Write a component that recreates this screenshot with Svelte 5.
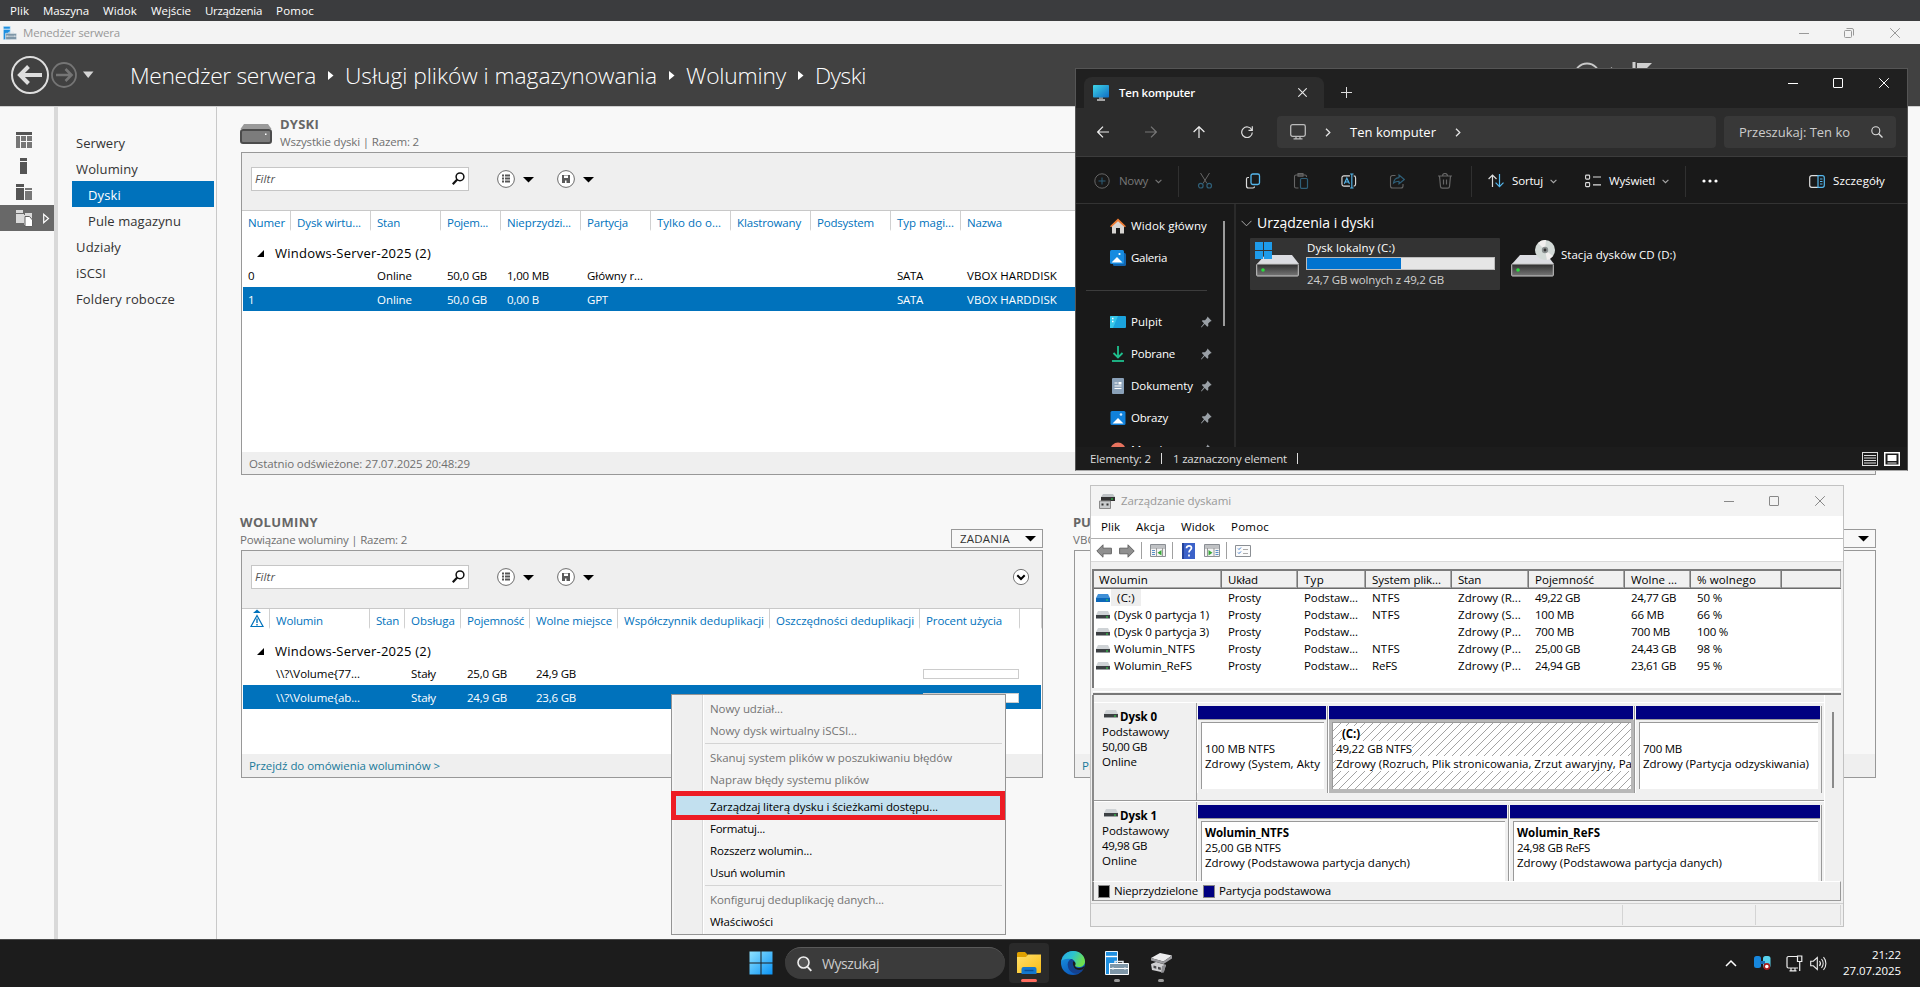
<script>
  // Sets a label to a known advance width by spreading the difference over its letters.
  function fit(node, w) {
    if (!w) return;
    const natural = node.getBoundingClientRect().width;
    const n = Math.max(1, node.textContent.length);
    node.style.letterSpacing = (w - natural) / n + 'px';
    node.style.width = w + 'px';
  }

  const vmMenu = [['Plik', 19], ['Maszyna', 46], ['Widok', 34], ['Wejście', 40], ['Urządzenia', 57], ['Pomoc', 38]];
  const crumbs = [['Menedżer serwera', 186], ['Usługi plików i magazynowania', 312], ['Woluminy', 100], ['Dyski', 51]];
  const nav = [
    { t: 'Serwery', w: 49 }, { t: 'Woluminy', w: 62 }, { t: 'Dyski', w: 33, sub: true, on: true },
    { t: 'Pule magazynu', w: 93, sub: true }, { t: 'Udziały', w: 45 }, { t: 'iSCSI', w: 30 }, { t: 'Foldery robocze', w: 99 }
  ];
  const diskHead = [['Numer', 37], ['Dysk wirtu...', 64], ['Stan', 23], ['Pojem...', 41], ['Nieprzydzi...', 64], ['Partycja', 41], ['Tylko do o...', 64], ['Klastrowany', 64], ['Podsystem', 57], ['Typ magi...', 57], ['Nazwa', 35]];
  const diskRows = [
    [['0', 7], null, ['Online', 35], ['50,0 GB', 40], ['1,00 MB', 42], ['Główny r...', 56], null, null, null, ['SATA', 26], ['VBOX HARDDISK', 90]],
    [['1', 6], null, ['Online', 35], ['50,0 GB', 40], ['0,00 B', 32], ['GPT', 21], null, null, null, ['SATA', 26], ['VBOX HARDDISK', 90]]
  ];
  const volHead = [['Wolumin', 47], ['Stan', 23], ['Obsługa', 44], ['Pojemność', 57], ['Wolne miejsce', 76], ['Współczynnik deduplikacji', 140], ['Oszczędności deduplikacji', 138], ['Procent użycia', 76], null, null];
  const volRows = [
    { cells: [['\\\\?\\Volume{77...', 84], null, ['Stały', 25], ['25,0 GB', 40], ['24,9 GB', 40]], used: 0 },
    { cells: [['\\\\?\\Volume{ab...', 84], null, ['Stały', 25], ['24,9 GB', 40], ['23,6 GB', 40]], used: 5 }
  ];
  const menu = [
    { t: 'Nowy udział...', w: 73, off: true }, { t: 'Nowy dysk wirtualny iSCSI...', w: 147, off: true }, null,
    { t: 'Skanuj system plików w poszukiwaniu błędów', w: 242, off: true }, { t: 'Napraw błędy systemu plików', w: 159, off: true }, null,
    { t: 'Zarządzaj literą dysku i ścieżkami dostępu...', w: 228, hot: true }, { t: 'Formatuj...', w: 55 }, { t: 'Rozszerz wolumin...', w: 102 }, { t: 'Usuń wolumin', w: 75 }, null,
    { t: 'Konfiguruj deduplikację danych...', w: 174, off: true }, { t: 'Właściwości', w: 63 }
  ];
  const places = [['desktop', 'Pulpit', 31], ['down', 'Pobrane', 44], ['doc', 'Dokumenty', 62], ['pic', 'Obrazy', 37], ['music', 'Muzyka', 41]];
  const mmcMenu = [['Plik', 19], ['Akcja', 29], ['Widok', 34], ['Pomoc', 38]];
  const mmcHead = [['Wolumin', 49], ['Układ', 30], ['Typ', 20], ['System plik...', 69], ['Stan', 23], ['Pojemność', 59], ['Wolne ...', 46], ['% wolnego', 59], null];
  const mmcRows = [
    [['(C:)', 18], ['NTFS', 28], ['Zdrowy (R...', 63], ['49,22 GB', 45], ['24,77 GB', 45], ['50 %', 25]],
    [['(Dysk 0 partycja 1)', 95], ['NTFS', 28], ['Zdrowy (S...', 63], ['100 MB', 39], ['66 MB', 33], ['66 %', 25]],
    [['(Dysk 0 partycja 3)', 95], null, ['Zdrowy (P...', 63], ['700 MB', 39], ['700 MB', 39], ['100 %', 31]],
    [['Wolumin_NTFS', 81], ['NTFS', 28], ['Zdrowy (P...', 63], ['25,00 GB', 45], ['24,43 GB', 45], ['98 %', 25]],
    [['Wolumin_ReFS', 78], ['ReFS', 25], ['Zdrowy (P...', 63], ['24,94 GB', 45], ['23,61 GB', 45], ['95 %', 25]]
  ];
  const disks = [
    { name: 'Dysk 0', size: '50,00 GB', cols: '131px 307px 187px', parts: [
      { b: null, s: ['100 MB NTFS', 70], d: ['Zdrowy (System, Akty', 115] },
      { b: ['(C:)', 18], s: ['49,22 GB NTFS', 76], d: ['Zdrowy (Rozruch, Plik stronicowania, Zrzut awaryjny, Pa', 296], sel: true },
      { b: null, s: ['700 MB', 39], d: ['Zdrowy (Partycja odzyskiwania)', 166] }
    ] },
    { name: 'Dysk 1', size: '49,98 GB', cols: '312px 313px', parts: [
      { b: ['Wolumin_NTFS', 84], s: ['25,00 GB NTFS', 76], d: ['Zdrowy (Podstawowa partycja danych)', 205] },
      { b: ['Wolumin_ReFS', 83], s: ['24,98 GB ReFS', 73], d: ['Zdrowy (Podstawowa partycja danych)', 205] }
    ] }
  ];
</script>

{#snippet T(c, cls)}{#if c}<span class="t {cls ?? ''}" use:fit={c[1]}>{c[0]}</span>{/if}{/snippet}

{#snippet chev(cls)}<svg class={cls} width="7" height="5" viewBox="0 0 7 5"><path d="M.6.8 3.5 3.7 6.4.8" fill="none" stroke="currentColor" stroke-width="1.1" /></svg>{/snippet}
{#snippet right()}<svg width="6" height="9" viewBox="0 0 6 9"><path d="M1 .8 4.8 4.5 1 8.2" fill="none" stroke="#e4e4e4" stroke-width="1.3" /></svg>{/snippet}
{#snippet caret()}<svg class="caret" width="11" height="6" viewBox="0 0 11 6"><path d="M0 0h11L5.500 5.600z" fill="#000" /></svg>{/snippet}
{#snippet winctl()}
  <svg width="10" height="10" viewBox="0 0 10 10"><path d="M0 5.500h10" stroke="currentColor" /></svg>
  <svg width="10" height="10" viewBox="0 0 10 10"><rect x=".5" y=".5" width="9" height="9" rx=".5" fill="none" stroke="currentColor" /></svg>
  <svg width="10" height="10" viewBox="0 0 10 10"><path d="M.2.2l9.600 9.600M9.800.2.2 9.800" stroke="currentColor" /></svg>
{/snippet}
{#snippet serverIcon(s)}
  <svg width={s} height={s} viewBox="0 0 24 24">
    <path d="M.5.5h12v23H.5z" fill="#1e8fe0" stroke="#e9f4fb" /><path d="M.5 5.500h12" stroke="#fff" stroke-width="1.400" />
    <path d="M4.500 12.500h19v11h-19z" fill="#7f97a8" stroke="#fff" /><path d="M4.500 17.500h19" stroke="#fff" /><path d="M10 12v-1.500h8V12" fill="none" stroke="#dfe8ee" stroke-width="1.500" /><path d="M8 16v3M20 16v3" stroke="#dfe8ee" />
  </svg>
{/snippet}
{#snippet miniDrive(sel)}
  <svg class="mini" width="14" height="8" viewBox="0 0 14 8">
    <path d="M2 0h10l2 4H0z" fill={sel ? '#3f8fd6' : '#cfd3d6'} /><path d="M0 4h14v4H0z" fill={sel ? '#0d67b8' : '#3c4043'} /><path d="M10 5.500h2v1h-2z" fill="#2fe04a" />
    {#if !sel}<path d="M0 7.500h14" stroke="#9a9ea1" />{/if}
  </svg>
{/snippet}
{#snippet tools()}
  <div class="tools">
    <div class="filter">{@render T(['Filtr', 20], 'it')}
      <svg width="13" height="13" viewBox="0 0 13 13"><circle cx="8" cy="4.800" r="3.900" fill="none" stroke="#111" stroke-width="1.500" /><path d="M5.200 7.600.8 12.200" stroke="#111" stroke-width="2.200" /></svg>
    </div>
    <svg class="c1" width="18" height="18" viewBox="0 0 18 18"><circle cx="9" cy="9" r="8.400" fill="#fff" stroke="#6b6b6b" /><path d="M5 5.500h2M5 8.500h2M5 11.500h2M8 5.500h5M8 8.500h5M8 11.500h5" stroke="#555" stroke-width="1.800" /></svg>
    {@render caret()}
    <svg class="c2" width="18" height="18" viewBox="0 0 18 18"><circle cx="9" cy="9" r="8.400" fill="#fff" stroke="#6b6b6b" /><path d="M5 5h8v8H5z" fill="#5a5a5a" /><path d="M7 5.500h4V8H7zM8 10.500h1.500V13H8z" fill="#fff" /></svg>
    {@render caret()}
  </div>
{/snippet}
{#snippet group()}
  <div class="group"><svg width="7" height="7" viewBox="0 0 7 7"><path d="M7 0v7H0z" fill="#000" /></svg>{@render T(['Windows-Server-2025 (2)', 156], 'md')}</div>
{/snippet}
{#snippet bigDrive(kind)}
  <svg class="drive" width="46" height="38" viewBox="0 0 46 38">
    <defs><linearGradient id="dg{kind}" x2="0" y2="1"><stop stop-color="#2e2e2e" /><stop offset="1" stop-color="#777" /></linearGradient></defs>
    <path d="M10 16h27l7 9H2z" fill="#dcdde2" /><rect x="1.700" y="25" width="41.600" height="12" rx=".8" fill="url(#dg{kind})" stroke="#c9c9c9" /><circle cx="8" cy="31" r="1.800" fill="#2bdc3e" />
    {#if kind === 'c'}
      <path d="M0 3h8v8H0zM9 3h8v8H9zM0 12h8v8H0zM9 12h8v8H9z" fill="#1e9bea" />
    {:else}
      <circle cx="35" cy="11" r="10" fill="#d3dad7" /><path d="M35 11 28 4a10 10 0 0 1 8-3zM35 11l8 6a10 10 0 0 1-6 4z" fill="#f1efee" /><circle cx="35" cy="11" r="3.200" fill="#8a9090" /><circle cx="35" cy="11" r="1.400" fill="#333" />
    {/if}
  </svg>
{/snippet}

<div class="screen">
  <div class="vm">{#each vmMenu as m}{@render T(m)}{/each}</div>
  <div class="smtitle">{@render serverIcon(14)}{@render T(['Menedżer serwera', 97])}
    <div class="ctl">
      <svg width="10" height="10" viewBox="0 0 10 10"><path d="M0 5.500h10" stroke="currentColor" /></svg>
      <svg width="10" height="10" viewBox="0 0 10 10"><rect x=".5" y="2.500" width="7" height="7" rx="1" fill="none" stroke="currentColor" /><path d="M2.500.5H8a1.500 1.500 0 0 1 1.500 1.500v5.500" fill="none" stroke="currentColor" /></svg>
      <svg width="10" height="10" viewBox="0 0 10 10"><path d="M.2.2l9.600 9.600M9.800.2.2 9.800" stroke="currentColor" /></svg>
    </div>
  </div>
  <header>
    <svg width="84" height="40" viewBox="0 0 84 40">
      <circle cx="20" cy="20" r="18" fill="none" stroke="#dedede" stroke-width="2" /><path d="M32 20H11M18.500 11.500 10 20l8.500 8.500" fill="none" stroke="#dedede" stroke-width="4" />
      <circle cx="54" cy="20" r="12" fill="none" stroke="#757575" stroke-width="1.800" /><path d="M46 20h15M55.500 14l6 6-6 6" fill="none" stroke="#757575" stroke-width="2.600" />
      <path d="M73 16.500h10.500L78.200 23z" fill="#d5d5d5" />
    </svg>
    <div class="crumbs">
      {#each crumbs as c, i}
        {#if i}<svg width="6" height="9" viewBox="0 0 6 9"><path d="M0 0l5.500 4.500L0 9z" fill="#fff" /></svg>{/if}
        {@render T(c)}
      {/each}
    </div>
    <svg class="flag" width="80" height="40" viewBox="0 0 80 40"><circle cx="14" cy="14" r="12.500" fill="none" stroke="#c9c9c9" stroke-width="1.800" /><path d="M38.500 5v22" stroke="#999" stroke-width="1.200" /><path d="M61 0v26" stroke="#cfcfcf" stroke-width="3" /><path d="M64 1h15l-7 7 7 7H64z" fill="#cfcfcf" /></svg>
  </header>

  <div class="body">
    <div class="strip">
      <svg width="16" height="16" viewBox="0 0 16 16" shape-rendering="crispEdges"><path d="M0 0h16v3H0z" fill="#555" /><path d="M0 4h4v12H0zM5 4h5v5H5zM11 4h5v5h-5zM5 10h5v6H5zM11 10h5v6h-5z" fill="#777" /></svg>
      <svg width="16" height="16" viewBox="0 0 16 16" shape-rendering="crispEdges"><path d="M4 0h7v3H4zM4 4h7v12H4z" fill="#555" /></svg>
      <svg width="16" height="16" viewBox="0 0 16 16" shape-rendering="crispEdges"><path d="M0 0h8v3H0zM0 4h8v12H0z" fill="#555" /><path d="M9 4h7v2H9zM9 7h7v9H9z" fill="#777" /></svg>
      <div class="sel">
        <svg width="34" height="17" viewBox="0 0 34 17"><path d="M0 0h7v3H0zM0 4h8v9H0zM9 3h7v3H9zM8 5h8v10H8z" fill="#d9d9d9" /><path d="M9 6.500h4.500L16.500 10v6.500H9z" fill="#fff" stroke="#5f5f5f" /><path d="M27.700 4.300v8.400l4.800-4.200z" fill="none" stroke="#fff" stroke-width="1.200" /></svg>
      </div>
    </div>
    <nav>{#each nav as n}<div class:sub={n.sub} class:on={n.on}>{@render T([n.t, n.w], 'md')}</div>{/each}</nav>
    <main>
      <div class="head one">
        <svg width="32" height="20" viewBox="0 0 32 20"><path d="M4 0h24l3.500 5H.5z" fill="#9a9a9a" /><rect x="1" y="6" width="30" height="13" rx="2" fill="#7c7c7c" stroke="#4c4c4c" stroke-width="2" /><path d="M25 9.500h1.500V11H25z" fill="#fff" /></svg>
        <div><h2>{@render T(['DYSKI', 39], 'md')}</h2><p>{@render T(['Wszystkie dyski | Razem: 2', 139])}</p></div>
      </div>
      <section class="panel disks">
        {@render tools()}
        <div class="row th dcols">{#each diskHead as h}<div>{@render T(h)}</div>{/each}</div>
        {@render group()}
        {#each diskRows as r, i}<div class="row dcols" class:on={i === 1}>{#each r as c}<div>{@render T(c)}</div>{/each}</div>{/each}
        <footer>{@render T(['Ostatnio odświeżone: 27.07.2025 20:48:29', 221])}</footer>
      </section>
      <div class="lower">
        <div class="vols">
          <div class="head two">
            <div><h2>{@render T(['WOLUMINY', 78], 'md')}</h2><p>{@render T(['Powiązane woluminy | Razem: 2', 167])}</p></div>
            <div class="tasks">{@render T(['ZADANIA', 50])}{@render caret()}</div>
          </div>
          <section class="panel low">
            <div class="tw">{@render tools()}
              <svg width="18" height="18" viewBox="0 0 18 18"><circle cx="9" cy="9" r="7.600" fill="#fff" stroke="#777" /><path d="M5.300 7.300 9 11l3.700-3.700" fill="none" stroke="#000" stroke-width="2" /></svg>
            </div>
            <div class="row th vcols">
              <div class="warn"><svg width="14" height="19" viewBox="0 0 14 19"><path d="M3 4h8L7 .5z" fill="#0072bc" /><path d="M7 6.500 13 17.500H1z" fill="none" stroke="#0072bc" stroke-width="1.200" /><path d="M7 9.500v4.500M7 15v1.500" stroke="#0072bc" stroke-width="1.400" /></svg></div>
              {#each volHead as h}<div>{@render T(h)}</div>{/each}
            </div>
            {@render group()}
            {#each volRows as r, i}
              <div class="row vcols" class:on={i === 1}><div></div>{#each r.cells as c}<div>{@render T(c)}</div>{/each}<div></div><div></div><div class="use"><i><b style="width:{r.used}px"></b></i></div></div>
            {/each}
            <footer class="lnk">{@render T(['Przejdź do omówienia woluminów >', 191])}</footer>
          </section>
        </div>
        <div class="pool">
          <div class="head two">
            <div><h2>{@render T(['PULA MAGAZYNU', 110], 'md')}</h2><p>{@render T(['VBOX HARDDISK', 90])}</p></div>
            <div class="tasks">{@render T(['ZADANIA', 50])}{@render caret()}</div>
          </div>
          <section class="panel low empty"><footer class="lnk">{@render T(['Przejdź do omówienia puli >', 150])}</footer></section>
        </div>
      </div>
    </main>
  </div>

  <div class="ctx">
    {#each menu as m}
      {#if m}<div class="mi" class:off={m.off} class:hot={m.hot}>{@render T([m.t, m.w])}</div>{:else}<hr />{/if}
    {/each}
  </div>
  <div class="mark"></div>

  <div class="explorer">
    <div class="etitle">
      <div class="tab">
        <svg width="16" height="16" viewBox="0 0 16 16"><defs><linearGradient id="mon" x2="1" y2="1"><stop stop-color="#3fd6e8" /><stop offset="1" stop-color="#0f6cc4" /></linearGradient></defs><path d="M6 12h4v2H6z" fill="#888" /><rect y="0" width="16" height="12.500" rx=".8" fill="url(#mon)" /><path d="M4 15h8" stroke="#d8d8d8" stroke-width="1.400" /></svg>
        {@render T(['Ten komputer', 76], 'sb')}
        <svg class="x" width="9" height="9" viewBox="0 0 9 9"><path d="M.3.3l8.400 8.400M8.700.3.3 8.700" stroke="#e8e8e8" stroke-width="1.100" /></svg>
      </div>
      <svg class="plus" width="11" height="11" viewBox="0 0 11 11"><path d="M5.500 0v11M0 5.500h11" stroke="#ddd" /></svg>
      <div class="ctl">{@render winctl()}</div>
    </div>
    <div class="enav">
      <svg width="12" height="12" viewBox="0 0 12 12"><path d="M12 6H.8M6 .6.7 6 6 11.400" fill="none" stroke="#eee" stroke-width="1.200" /></svg>
      <svg width="12" height="12" viewBox="0 0 12 12"><path d="M0 6h11.200M6 .6 11.300 6 6 11.400" fill="none" stroke="#777" stroke-width="1.200" /></svg>
      <svg width="12" height="12" viewBox="0 0 12 12"><path d="M6 12V.8M.6 6 6 .7 11.400 6" fill="none" stroke="#eee" stroke-width="1.200" /></svg>
      <svg width="12" height="12" viewBox="0 0 12 12"><path d="M10.800 4A5.300 5.300 0 1 0 11.300 6.500M11.300.3v4H7.500" fill="none" stroke="#ddd" stroke-width="1.200" /></svg>
      <div class="addr">
        <svg width="16" height="16" viewBox="0 0 16 16"><rect x=".7" y=".7" width="14.600" height="11.600" rx="1.800" fill="none" stroke="#bbb" stroke-width="1.300" /><path d="M6 12.500v2M10 12.500v2M3.500 14.800h9" stroke="#bbb" stroke-width="1.300" /></svg>
        {@render right()}{@render T(['Ten komputer', 86], 'md')}{@render right()}
      </div>
      <div class="find">{@render T(['Przeszukaj: Ten ko', 111], 'md')}<svg width="12" height="12" viewBox="0 0 12 12"><circle cx="4.800" cy="4.800" r="4" fill="none" stroke="#ddd" stroke-width="1.100" /><path d="M7.700 7.700l3.800 3.800" stroke="#ddd" stroke-width="1.300" /></svg></div>
    </div>
    <div class="ebar">
      <svg style="margin-left:18px" width="16" height="16" viewBox="0 0 16 16"><circle cx="8" cy="8" r="7.200" fill="none" stroke="#666" /><path d="M8 4.500v7M4.500 8h7" stroke="#2f5f78" /></svg>
      <span class="dim" style="margin-left:9px">{@render T(['Nowy', 29])}</span>
      {@render chev('cv dim')}
      <i></i>
      <div class="acts">
        <svg width="16" height="16" viewBox="0 0 16 16"><path d="M3.500 0l6.500 10.500M12.500 0 6 10.500" stroke="#666" fill="none" /><circle cx="3.800" cy="12.700" r="2.300" fill="none" stroke="#2f5f78" stroke-width="1.200" /><circle cx="12.200" cy="12.700" r="2.300" fill="none" stroke="#2f5f78" stroke-width="1.200" /></svg>
        <svg width="16" height="16" viewBox="0 0 16 16"><path d="M4 4.500H3A1.500 1.500 0 0 0 1.500 6v7A2 2 0 0 0 3.500 15H8a1.500 1.500 0 0 0 1.500-1.500" fill="none" stroke="#ddd" stroke-width="1.200" /><rect x="6" y="1" width="8.500" height="10.500" rx="1.800" fill="none" stroke="#55b8ee" stroke-width="1.300" /></svg>
        <svg width="16" height="16" viewBox="0 0 16 16"><path d="M5.500 15H3A1.500 1.500 0 0 1 1.500 13.500v-10A1.500 1.500 0 0 1 3 2h9a1.500 1.500 0 0 1 1.500 1.500V4M5 .6h5v2.600H5z" fill="none" stroke="#666" stroke-width="1.100" /><rect x="7.500" y="5.500" width="7" height="9.800" rx="1" fill="none" stroke="#2f5f78" stroke-width="1.200" /></svg>
        <svg width="17" height="16" viewBox="0 0 17 16"><path d="M9.500 2.500H3A2 2 0 0 0 1 4.500v7a2 2 0 0 0 2 2h6.500M13.500 2.500a2 2 0 0 1 2 2v7a2 2 0 0 1-2 2" fill="none" stroke="#ddd" stroke-width="1.200" /><path d="M3.500 11 6.200 5 9 11M4.500 9h3.500" fill="none" stroke="#55b8ee" stroke-width="1.200" /><path d="M11.500.5v15M9.700.6h3.600M9.700 15.400h3.600" stroke="#55b8ee" stroke-width="1.200" /></svg>
        <svg width="16" height="16" viewBox="0 0 16 16"><path d="M6.500 2.500h-3A2 2 0 0 0 1.500 4.500v8.500a2 2 0 0 0 2 2h8.500a2 2 0 0 0 2-2v-2" fill="none" stroke="#666" stroke-width="1.100" /><path d="M4.500 10C5 6.500 7 4.800 10 4.600V2l5.300 4.500L10 10.800V8.200C7.500 8.200 6 8.600 4.500 10z" fill="none" stroke="#2f5f78" stroke-width="1.100" /></svg>
        <svg width="16" height="16" viewBox="0 0 16 16"><path d="M1 3h14M5.500 3a2.500 2.500 0 0 1 5 0M2.500 3l1 10.500a1.800 1.800 0 0 0 1.800 1.700h5.400a1.800 1.800 0 0 0 1.800-1.700l1-10.500M6.500 6.500v5M9.500 6.500v5" fill="none" stroke="#666" stroke-width="1.200" /></svg>
      </div>
      <i class="b"></i>
      <svg style="margin-left:16px" width="16" height="14" viewBox="0 0 16 14"><path d="M4.500 13V1M.6 5 4.500 1l4 4" fill="none" stroke="#ddd" stroke-width="1.200" /><path d="M11.500 0v12.500M7.600 8.600l3.900 4 4-4" fill="none" stroke="#55b8ee" stroke-width="1.200" /></svg>
      <span style="margin-left:8px">{@render T(['Sortuj', 31])}</span>{@render chev('cv')}
      <svg style="margin-left:28px" width="16" height="14" viewBox="0 0 16 14"><rect x=".6" y="1.100" width="4" height="4" rx=".8" fill="none" stroke="#ddd" stroke-width="1.100" /><rect x=".6" y="8.600" width="4" height="4" rx=".8" fill="none" stroke="#ddd" stroke-width="1.100" /><path d="M8 3h8M8 10.800h8" stroke="#ddd" stroke-width="1.200" /></svg>
      <span style="margin-left:8px">{@render T(['Wyświetl', 46])}</span>{@render chev('cv')}
      <i></i>
      <svg style="margin-left:16px" width="16" height="4" viewBox="0 0 16 4"><circle cx="2" cy="2" r="1.600" fill="#fff" /><circle cx="8" cy="2" r="1.600" fill="#fff" /><circle cx="14" cy="2" r="1.600" fill="#fff" /></svg>
      <div class="det">
        <svg width="16" height="13" viewBox="0 0 16 13"><path d="M9 .7H2.700a2 2 0 0 0-2 2v7.600a2 2 0 0 0 2 2H9" fill="none" stroke="#ddd" stroke-width="1.200" /><path d="M9 .7h4.300a2 2 0 0 1 2 2v7.600a2 2 0 0 1-2 2H9zM11 4h2.500M11 6.500h2.500M11 9h2.500" fill="none" stroke="#55b8ee" stroke-width="1.200" /></svg>
        {@render T(['Szczegóły', 52])}
      </div>
    </div>
    <div class="emain">
      <aside>
        <div class="pl"><svg width="16" height="16" viewBox="0 0 16 16"><path d="M2 7 8 2l6 5v8.500h-4V10H6v5.500H2z" fill="#d8d5d2" /><path d="M0 8.200 8 .6l8 7.600-1.200 1.100L8 3.200 1.200 9.300z" fill="#ef7b32" /></svg>{@render T(['Widok główny', 76])}</div>
        <div class="pl"><svg width="16" height="16" viewBox="0 0 16 16"><rect x="3" y="3" width="13" height="13" rx="1.500" fill="#1264ad" /><rect width="14" height="14" rx="1.500" fill="#168be0" /><path d="M1.500 12.500 7 7l5.500 5.500z" fill="#fff" /><circle cx="9.500" cy="4" r="1.100" fill="#fff" /></svg>{@render T(['Galeria', 36])}</div>
        <hr />
        {#each places as p}
          <div class="pl">
            <svg width="16" height="16" viewBox="0 0 16 16">
              {#if p[0] === 'desktop'}<rect y="2" width="16" height="12" rx="1" fill="#1ba3dd" /><path d="M0 3a1 1 0 0 1 1-1h7l-5 12H0z" fill="#36c7ea" /><path d="M2 4.500h1.500M2 7.500h1.500" stroke="#fff" stroke-width="1.500" />
              {:else if p[0] === 'down'}<path d="M8 0v11M3.500 7 8 11.500 12.500 7" fill="none" stroke="#1fc08e" stroke-width="1.800" /><path d="M2 15h12" stroke="#1fc08e" stroke-width="1.800" />
              {:else if p[0] === 'doc'}<rect x="2" width="12" height="16" rx="1" fill="#8aa1b8" /><path d="M4.500 5h3M4.500 8h7M4.500 10.500h7" stroke="#fff" stroke-width="1.200" /><path d="M8.500 4h3v2.500h-3z" fill="#fff" />
              {:else if p[0] === 'pic'}<rect x=".5" y="1" width="15" height="14" rx="1.500" fill="#1181da" /><path d="M2.500 13.500 8 8l5.500 5.500z" fill="#fff" /><circle cx="11" cy="4.500" r="1.300" fill="#cfeaff" />
              {:else}<circle cx="8" cy="8" r="7.500" fill="#e8735e" />{/if}
            </svg>
            {@render T([p[1], p[2]])}
            <svg class="pin" width="11" height="12" viewBox="0 0 11 12"><path d="M6.500.5 10.700 5l-1.500.5-2 2 .1 2.500-1 .7L3.700 8 .5 11.500 0 11l3-3.700L.8 5l.8-.8 2.400.1L6 2z" fill="#9aa0a6" /></svg>
          </div>
        {/each}
      </aside>
      <div class="sb-line"></div>
      <div class="content">
        <div class="gh"><svg width="11" height="7" viewBox="0 0 11 7"><path d="M.5.8l5 5 5-5" fill="none" stroke="#aaa" /></svg>{@render T(['Urządzenia i dyski', 117], 'lg')}</div>
        <div class="drives">
          <div class="card">{@render bigDrive('c')}<div class="inf">{@render T(['Dysk lokalny (C:)', 88])}<div class="cap"><b></b></div>{@render T(['24,7 GB wolnych z 49,2 GB', 137], 'gr')}</div></div>
          <div class="cd">{@render bigDrive('d')}{@render T(['Stacja dysków CD (D:)', 115])}</div>
        </div>
      </div>
    </div>
    <div class="estat">
      {@render T(['Elementy: 2', 61])}<i></i>{@render T(['1 zaznaczony element', 114])}<i></i>
      <svg class="v1" width="16" height="14" viewBox="0 0 16 14"><rect x=".5" y=".5" width="15" height="13" fill="none" stroke="#ddd" /><path d="M2 3.500h12M2 6h12M2 8.500h12M2 11h12" stroke="#ddd" /></svg>
      <svg width="16" height="14" viewBox="0 0 16 14"><rect x=".75" y=".75" width="14.500" height="12.500" fill="none" stroke="#fff" stroke-width="1.500" /><path d="M3.500 3h9v6h-9z" fill="#fff" /><path d="M3.500 11h9" stroke="#ddd" /></svg>
    </div>
  </div>

  <div class="mmc">
    <div class="mtitle">
      <svg width="16" height="16" viewBox="0 0 16 16"><path d="M4 1h10l2 3H2z" fill="#bfc3c6" /><path d="M2 4h14v4H2z" fill="#333" /><path d="M12 5.500h2v1h-2z" fill="#2fe04a" /><path d="M.5 8h11v7.500H.5z" fill="#c9cbcd" stroke="#8a8a8a" /><path d="M2.500 10.500h2v2h-2zM7.500 10.500h2v2h-2z" fill="#333" /></svg>
      {@render T(['Zarządzanie dyskami', 110])}<div class="ctl">{@render winctl()}</div>
    </div>
    <div class="mmenu">{#each mmcMenu as m}{@render T(m)}{/each}</div>
    <div class="mtools">
      <svg width="16" height="14" viewBox="0 0 16 14"><path d="M.8 7 7 .8v3.400h8.400v5.600H7v3.400z" fill="#8f8f8f" stroke="#666" /></svg>
      <svg style="margin-left:7px" width="16" height="14" viewBox="0 0 16 14"><path d="M15.200 7 9 .8v3.400H.6v5.600H9v3.400z" fill="#8f8f8f" stroke="#666" /></svg>
      <i style="margin-left:6px"></i>
      <svg style="margin-left:8px" width="16" height="13" viewBox="0 0 16 13"><path d="M.5.5h15v12H.5z" fill="#f4f4f4" stroke="#8b8f94" /><path d="M0 2h16M0 4h16" stroke="#8b8f94" /><path d="M2 6.500h3M2 8.500h3M2 10.500h3" stroke="#5a8fc8" /><path d="M6.500 4v8.500M12.500 4v8.500" stroke="#999" /><path d="M11.500 6v5.500L7.500 8.800z" fill="#39a83a" /></svg>
      <i style="margin-left:6px"></i>
      <svg style="margin-left:9px" width="13" height="16" viewBox="0 0 13 16"><path d="M0 0h13v16H0z" fill="#3c62c9" /><path d="M0 0h2v16H0z" fill="#24439b" /><path d="M4.500 5.200C4.500 2 9.500 2.200 9.500 5c0 2-2.500 2-2.500 4.500M7 11.500v2" fill="none" stroke="#fff" stroke-width="1.700" /></svg>
      <svg style="margin-left:9px" width="16" height="13" viewBox="0 0 16 13"><path d="M.5.5h15v12H.5z" fill="#f4f4f4" stroke="#8b8f94" /><path d="M0 2h16M0 4h16" stroke="#8b8f94" /><path d="M11.500 6.500h3M11.500 8.500h3M11.500 10.500h3" stroke="#5a8fc8" /><path d="M3.500 4v8.500M10 4v8.500" stroke="#999" /><path d="M4.500 6v5.500l4-2.700z" fill="#39a83a" /></svg>
      <i style="margin-left:6px"></i>
      <svg style="margin-left:8px" width="16" height="12" viewBox="0 0 16 12"><path d="M.5.5h15v11H.5z" fill="#fbfbfb" stroke="#8b8f94" /><path d="M3 3.500l1 1 2-2M3 7.500l1 1 2-2" fill="none" stroke="#3a78c8" /><path d="M8 4.500h5M8 8.500h5" stroke="#aaa" /></svg>
    </div>
    <div class="mlist">
      <div class="mcols mh">{#each mmcHead as h}<div>{@render T(h)}</div>{/each}</div>
      {#each mmcRows as r, i}
        <div class="mcols mr">
          <div class="nm" class:c={i === 0}>{@render miniDrive(i === 0)}<span class="nb">{@render T(r[0])}</span></div>
          <div>{@render T(['Prosty', 33])}</div><div>{@render T(['Podstaw...', 54])}</div>
          {#each r.slice(1) as c}<div>{@render T(c)}</div>{/each}
        </div>
      {/each}
    </div>
    <div class="split"></div>
    <div class="mgraph">
      <div class="dl">
        {#each disks as d, di}
          <div class="disk">
            <div class="lab"><div class="dn">{@render miniDrive(false)}{@render T([d.name, 37], 'bd')}</div><div>{@render T(['Podstawowy', 67])}</div><div>{@render T([d.size, 45])}</div><div>{@render T(['Online', 35])}</div></div>
            <div class="parts" style="grid-template-columns:{d.cols}">
              {#each d.parts as p}
                <div class="part" class:sel={p.sel}>
                  <div class="navy"></div>
                  <div class="pb">
                    <div class="pi">
                      {#if p.sel}<svg class="hatch" width="304" height="67"><defs><pattern id="ht" width="8" height="8" patternUnits="userSpaceOnUse"><path d="M-1 9 9-1M-1 1 1-1M7 9l2-2" stroke="#8c8c8c" stroke-width=".8" /></pattern></defs><rect width="304" height="67" fill="url(#ht)" /></svg>{/if}
                      <div class="ln" class:ind={p.sel}>{@render T(p.b, 'bd')}</div><div class="ln">{@render T(p.s)}</div><div class="ln">{@render T(p.d)}</div>
                    </div>
                  </div>
                </div>
              {/each}
            </div>
          </div>
        {/each}
      </div>
      <div class="scr"><b></b></div>
    </div>
    <div class="legend"><i></i>{@render T(['Nieprzydzielone', 84])}<i class="nv"></i>{@render T(['Partycja podstawowa', 112])}</div>
    <div class="mstat"><i></i><i></i><i></i></div>
  </div>

  <div class="taskbar">
    <svg class="start" width="24" height="24" viewBox="0 0 24 24"><defs><linearGradient id="wn" x2="1" y2="1"><stop stop-color="#8fe3ff" /><stop offset="1" stop-color="#0a93f5" /></linearGradient></defs><path d="M.5.5h11v11H.5zM12.500.5h11v11h-11zM.5 12.500h11v11H.5zM12.500 12.500h11v11h-11z" fill="url(#wn)" /></svg>
    <div class="pill"><svg width="15" height="16" viewBox="0 0 15 16"><circle cx="6.500" cy="6.500" r="5.500" fill="#555" stroke="#eee" stroke-width="1.600" /><path d="M10.500 10.800l3.800 4" stroke="#eee" stroke-width="1.900" /></svg>{@render T(['Wyszukaj', 57], 'lg')}</div>
    <div class="tile act"><svg width="24" height="22" viewBox="0 0 24 22"><defs><linearGradient id="fo" x2="1" y2="1"><stop stop-color="#ffdf6b" /><stop offset="1" stop-color="#f9bd16" /></linearGradient></defs><path d="M0 1.500A1.500 1.500 0 0 1 1.500 0H8l2.500 2.500V6H0z" fill="#e0a100" /><path d="M0 5h9l2-2.500h13V20a1 1 0 0 1-1 1H0z" fill="url(#fo)" /><path d="M4.500 22v-5a2 2 0 0 1 2-2h11a2 2 0 0 1 2 2v5z" fill="#1478cf" /><path d="M7.500 18.500h9" stroke="#0a4f98" stroke-width="1.400" /></svg><b></b></div>
    <div class="tile"><svg width="24" height="24" viewBox="0 0 24 24">
      <defs><linearGradient id="e1" x2="1" y2=".4"><stop stop-color="#2aa7e8" /><stop offset=".5" stop-color="#2cc4cf" /><stop offset="1" stop-color="#6ee04f" /></linearGradient><linearGradient id="e2" x2=".6" y2="1"><stop stop-color="#1b9be6" /><stop offset="1" stop-color="#0b55b8" /></linearGradient></defs>
      <circle cx="12" cy="12" r="12" fill="url(#e2)" /><path d="M.3 10.500C1.500 4 6.500 0 12 0c7 0 12 5 12 10.500 0 3.500-2.500 5.500-6 5.500-3 0-4.500-1-4-2 .8-1 .8-5-4-6C6 7.200 1.500 8 .3 10.500z" fill="url(#e1)" /><path d="M10 8c-3 1.500-4 4.500-3 8 1.200 4.500 5.500 7.500 10 6.500 2-.8 4-2.500 5-4.500-4 2-9 .5-10-4-.3-1.800.5-3 1.300-3.500C12.500 9.200 11.500 8.300 10 8z" fill="#14418f" /><path d="M12.200 10.300a2.900 2.900 0 0 1 2.200 3.500c-.7 1.200-.2 2.100 1.200 2.700 2.600 1.100 5.700.4 7.300-1.200l.8.300-1.500 2.700c-4.500 1.800-9 .3-10-3.800-.4-1.800-.3-3.100 0-4.200z" fill="#1c1c1c" />
    </svg></div>
    <div class="tile">{@render serverIcon(24)}<b></b></div>
    <div class="tile"><svg width="22" height="22" viewBox="0 0 22 22"><path d="M1 6 10 1l12 2.500-8.500 6z" fill="#ececee" /><path d="M1 6l12.500 3.500L22 3.500v3l-8.500 5.500L1 8.500z" fill="#9c9ca0" /><path d="M1 12l5-2 10 3-2.500 7.500L2 18z" fill="#d0d0d2" /><path d="M3.500 13.500l2.800.8v2.500l-2.800-.8zM8 14.800l2.800.8V18L8 17.300z" fill="#4a4a4c" /><path d="M12 14l4-1.500-2 7.500-3 1z" fill="#8c8c90" /></svg><b></b></div>
    <div class="tray">
      <svg width="12" height="8" viewBox="0 0 12 8"><path d="M1 7l5-5 5 5" fill="none" stroke="#fff" stroke-width="1.500" /></svg>
      <svg style="margin-left:17px" width="17" height="16" viewBox="0 0 17 16"><rect y="1" width="7" height="12" rx="2.500" fill="#1787dd" /><rect x="9" y="1" width="7.500" height="12" rx="2.500" fill="#58d3ee" /><path d="M6 6h5v3H6z" fill="#1b6fb5" /><circle cx="12.800" cy="11.500" r="2.600" fill="#fff" stroke="#a81c1c" stroke-width="1.600" /></svg>
      <svg style="margin-left:15px" width="17" height="17" viewBox="0 0 17 17"><path d="M11 1.500H2.500a1.500 1.500 0 0 0-1.500 1.500v8.500A1.500 1.500 0 0 0 2.500 13H12M5 13v2.500M9 13v2.500M3.500 15.800h7" fill="none" stroke="#eee" stroke-width="1.200" /><path d="M11.500 1h4.300v5.500h-4.300zM13.700 6.500V16" fill="none" stroke="#eee" stroke-width="1.200" /></svg>
      <svg style="margin-left:7px" width="17" height="15" viewBox="0 0 17 15"><path d="M.7 5.200h2.600L7.300 1.500v12L3.300 9.800H.7z" fill="none" stroke="#eee" stroke-width="1.100" /><path d="M9.500 5a4 4 0 0 1 0 5M11.500 3a7 7 0 0 1 0 9M13.500 1.200a9.500 9.500 0 0 1 0 12.600" fill="none" stroke="#eee" stroke-width="1.100" /></svg>
      <div class="clock">{@render T(['21:22', 29])}{@render T(['27.07.2025', 58])}</div>
    </div>
  </div>
</div>

<style>
  :global(body) { margin: 0; }
  .screen { position: relative; width: 1920px; height: 987px; overflow: hidden; background: #f8f8f8; font: 11.5px/16px "Open Sans", "Noto Sans", sans-serif; color: #000; display: flex; flex-direction: column; }
  .screen :global(svg) { display: block; flex: none; }
  .t { display: inline-block; white-space: pre; flex: none; }
  .md { font-size: 13px; }
  .lg { font-size: 14px; }
  .sb { font-weight: 600; }
  .bd { font-weight: 700; }
  .it { font-style: italic; color: #555; }
  .gr { color: #d0d0d0; }
  h2, p { margin: 0; font-size: inherit; }

  .vm { height: 21px; flex: none; background: #3b3c3e; color: #fff; display: flex; align-items: center; gap: 14px; padding-left: 10px; }
  .smtitle { height: 23px; flex: none; background: #f3f3f3; color: #999; display: flex; align-items: center; gap: 6px; padding: 0 20px 0 3px; }
  .ctl { margin-left: auto; display: flex; gap: 35px; }
  .ctl svg:last-child { margin-left: 1px; }
  header { height: 62px; flex: none; background: #414141; border-bottom: 1px solid #cfcfcf; display: flex; padding-left: 10px; color: #fff; }
  header > svg:first-child { margin-top: 11px; }
  .crumbs { display: flex; align-items: center; gap: 11.500px; margin-left: 36px; font-size: 22.800px; line-height: 62px; font-weight: 300; }
  .crumbs .t { padding-top: 2px; }
  .flag { margin: 18px 267px 0 auto; }

  .body { flex: 1; display: flex; min-height: 0; }
  .strip { width: 54px; border-right: 4px solid #d9d9d9; flex: none; display: flex; flex-direction: column; padding-top: 25px; gap: 10px; background: #f8f8f8; }
  .strip > svg { margin-left: 16px; }
  .strip .sel { margin-top: -5px; background: #686868; height: 26px; padding-left: 16px; display: flex; align-items: center; }
  nav { width: 158px; flex: none; border-right: 1px solid #c9c9c9; padding-top: 22px; color: #333; }
  nav div { height: 26px; box-sizing: border-box; display: flex; align-items: center; margin: 0 2px 0 14px; padding: 2px 0 0 4px; }
  nav .sub { padding-left: 16px; }
  nav .on { background: #0072bc; color: #fff; }

  main { flex: 1; min-width: 0; padding-left: 24px; }
  .head { display: flex; color: #707070; }
  .head h2 { line-height: 17px; color: #666; font-weight: 700; }
  .head p { line-height: 17px; }
  .one { padding: 9px 0 2px; height: 34px; margin-left: -1px; }
  .one svg { margin: 8px 8px 0 0; }
  .two { height: 37px; padding-top: 38px; justify-content: space-between; margin-left: -1px; }
  .two h2 { line-height: 18px; }
  .two p { line-height: 16px; }
  .tasks { width: 92px; height: 19px; border: 1px solid #999; margin-top: 16px; display: flex; align-items: center; justify-content: space-between; padding-left: 8px; padding-right: 6px; box-sizing: border-box; color: #333; }
  .tasks .caret { margin: 0; }
  .panel { border: 1px solid #989898; box-sizing: border-box; background: #fff; display: flex; flex-direction: column; }
  .disks { width: 1635px; height: 323px; overflow: hidden; }
  .lower { display: flex; gap: 31px; }
  .vols { width: 802px; }
  .pool { width: 802px; }
  .low { height: 228px; }
  .empty { background: #f8f8f8; }
  .tools { height: 57px; flex: none; background: #efefef; border-bottom: 1px solid #c8c8c8; display: flex; padding-left: 9px; align-items: flex-start; }
  .tw { display: flex; background: #efefef; border-bottom: 1px solid #c8c8c8; }
  .tw .tools { flex: 1; border: 0; }
  .tw > svg { margin: 17px 12px 0 0; }
  .filter { width: 218px; height: 24px; box-sizing: border-box; border: 1px solid #c6c6c6; background: #fff; margin-top: 14px; display: flex; justify-content: space-between; align-items: center; padding: 0 3px; }
  .filter > svg { margin-top: -1px; }
  .c1 { margin: 17px 0 0 28px; }
  .c2 { margin: 17px 0 0 23px; }
  .caret { margin: 24px 0 0 8px; }
  .row { display: grid; height: 24px; box-sizing: border-box; flex: none; align-items: center; margin: 0 1px; padding-top: 1px; }
  .row > div { padding-left: 7px; min-width: 0; display: flex; }
  .row > div:first-child { padding-left: 5px; }
  .dcols { grid-template-columns: 47px 80px 70px 60px 80px 70px 80px 80px 80px 70px 1fr; }
  .vcols { grid-template-columns: 26px 100px 35px 56px 69px 88px 152px 150px 100px 22px 1fr; }
  .th { height: 30px; color: #0072bc; align-items: stretch; padding-top: 0; }
  .th > div { line-height: 24px; border-left: 1px solid; border-image: linear-gradient(#d0d0d0 60%, #fff 66%) 1; padding-left: 6px; }
  .th > div:first-child { border: 0; }
  .th > .warn.warn { padding: 0 0 0 7px; }
  .group { height: 22px; box-sizing: border-box; flex: none; padding: 2px 0 0 15px; display: flex; align-items: center; gap: 11px; }
  .on { background: #0072bc; color: #fff; }
  .use { grid-column: 9; padding-left: 4px !important; }
  .use i { width: 94px; height: 8px; border: 1px solid #ccc; background: #fff; }
  .use b { display: block; height: 8px; background: #12b012; }
  footer { margin-top: auto; height: 22px; box-sizing: border-box; background: #efefef; color: #6f6f6f; display: flex; align-items: center; padding: 1px 0 0 7px; }
  .lnk { color: #1a7a9a; height: 23px; }

  .ctx { position: absolute; left: 671px; top: 694px; width: 335px; height: 241px; box-sizing: border-box; border: 1px solid #949494; background: linear-gradient(90deg, #f4f4f4 2px, #efefef 2px, #efefef 30px, #d8d8d8 30px, #d8d8d8 31px, #fff 31px, #fff 32px, #f4f4f4 32px); padding: 3px 3px 0 2px; }
  .mi { height: 22px; display: flex; align-items: center; padding-left: 36px; }
  .mi.off { color: #747474; }
  .hot { background: #c2e0ef; }
  .ctx hr { border: 0; height: 1px; background: #d4d4d4; margin: 1px 0 3px 31px; }
  .mark { position: absolute; left: 671px; top: 791px; width: 334px; height: 29px; box-sizing: border-box; border: 5px solid #ed1c24; }

  .explorer { position: absolute; left: 1075px; top: 68px; width: 833px; height: 403px; box-sizing: border-box; border: 1px solid #555; border-bottom-color: #a8a8a8; background: #191919; color: #fff; display: flex; flex-direction: column; }
  .etitle { height: 39px; flex: none; background: #202020; display: flex; align-items: flex-start; }
  .tab { width: 240px; height: 31px; box-sizing: border-box; margin: 8px 0 0 8px; background: #2c2c2c; border-radius: 8px 8px 0 0; display: flex; align-items: center; padding: 0 17px 0 9px; gap: 10px; }
  .x { margin-left: auto; }
  .plus { margin: 18px 0 0 17px; }
  .etitle .ctl { margin: 9px 18px 0 auto; }
  .enav { height: 48px; flex: none; background: #2c2c2c; border-bottom: 1px solid #3c3c3c; display: flex; align-items: center; gap: 36px; padding-left: 21px; }
  .addr { width: 439px; height: 32px; box-sizing: border-box; background: #383838; border-radius: 4px; margin-left: -12px; display: flex; align-items: center; padding-left: 13px; gap: 19px; }
  .find { width: 172px; height: 32px; box-sizing: border-box; background: #383838; border-radius: 4px; margin-left: -28px; display: flex; align-items: center; justify-content: space-between; padding: 0 13px 0 15px; color: #ccc; }
  .ebar { height: 46px; box-sizing: border-box; height: 47px; padding-top: 2px; flex: none; border-bottom: 1px solid #333; display: flex; align-items: center; }
  .ebar > i { width: 1px; height: 31px; background: #303030; margin-left: 16px; }
  .ebar > i.b { margin-left: 18px; }
  .ebar :global(.cv) { margin-left: 7px; color: #aaa; }
  .dim, .ebar :global(.dim) { color: #777; }
  .acts { display: flex; gap: 32px; margin-left: 18px; width: 256px; }
  .acts svg { width: 16px; }
  .det { margin-left: auto; display: flex; align-items: center; gap: 8px; padding-right: 22px; }
  .emain { flex: 1; min-height: 0; overflow: hidden; display: flex; }
  aside { width: 147px; flex: none; padding-top: 6px; box-sizing: border-box; }
  .pl { height: 32px; display: flex; align-items: center; padding-left: 34px; gap: 5px; }
  .pin { margin-left: auto; margin-right: 11px; }
  aside hr { border: 0; height: 1px; background: #3c3c3c; margin: 16px 16px 15px 10px; }
  .sb-line { width: 11px; flex: none; border-right: 2px solid #2a2a2a; background: linear-gradient(#9b9b9b, #9b9b9b) 0 17px / 2px 105px no-repeat; }
  .content { padding: 8px 0 0 6px; }
  .gh { display: flex; align-items: center; gap: 5px; height: 22px; margin-left: -1px; }
  .drives { display: flex; margin-top: 4px; padding-left: 8px; }
  .card { width: 250px; height: 52px; box-sizing: border-box; background: #333; display: flex; border-radius: 1px; }
  .card .drive { margin: 1px 5px 0 5px; }
  .inf { display: flex; flex-direction: column; align-items: flex-start; padding-top: 1px; line-height: 18px; }
  .inf .t { margin-left: 1px; }
  .cap { width: 189px; height: 13px; box-sizing: border-box; border: 1px solid #bcbcbc; background: #e6e6e6; display: flex; margin-bottom: 1px; }
  .cap b { width: 94px; background: #0173cf; }
  .cd { display: flex; padding-left: 10px; gap: 5px; line-height: 34px; }
  .cd .drive { margin-top: 1px; }
  .estat { height: 23px; flex: none; background: #1c1c1c; display: flex; align-items: center; padding: 0 7px 0 14px; color: #ddd; }
  .estat i { width: 1px; height: 11px; background: #ddd; margin: 0 11px 0 10px; }
  .v1 { margin: 0 6px 0 auto; }

  .mmc { position: absolute; left: 1090px; top: 485px; width: 754px; height: 442px; box-sizing: border-box; border: 1px solid #c2c2c2; background: #f0f0f0; display: flex; flex-direction: column; }
  .mtitle { height: 30px; flex: none; background: #f3f3f3; color: #999; display: flex; align-items: center; gap: 6px; padding: 0 18px 0 8px; }
  .mtitle .ctl { color: #888; }
  .mmenu { height: 22px; flex: none; background: #fff; border-bottom: 1px solid #b0b0b0; display: flex; align-items: center; gap: 16px; padding-left: 10px; }
  .mtools { height: 23px; flex: none; background: #fff; border-bottom: 1px solid #d9d9d9; display: flex; align-items: center; padding: 1px 0 0 5px; box-sizing: border-box; }
  .mtools i { width: 1px; height: 17px; background: #a0a0a0; }
  .mlist { height: 119px; flex: none; box-sizing: border-box; margin: 7px 2px 0 1px; border-left: 2px solid #7a7a7a; border-top: 2px solid #7a7a7a; background: #fff; }
  .mcols { display: grid; grid-template-columns: 128px 76px 68px 86px 77px 96px 66px 91px 1fr; }
  .mh { height: 17px; background: #f0f0f0; border-bottom: 1px solid #6b6b6b; }
  .mh > div { border-right: 1px solid #777; padding-left: 6px; line-height: 17px; box-shadow: inset -1px -1px #a8a8a8; }
  .mh > div:last-child { border: 0; }
  .mh > div:first-child { padding-left: 5px; }
  .mr { height: 17px; line-height: 17px; }
  .mr > div { padding-left: 6px; }
  .mr .nm { padding-left: 2px; display: flex; align-items: center; gap: 4px; }
  .nb { display: flex; }
  .c .nb { background: #eee; padding: 0 6px; margin-left: -3px; }
  .split { height: 1px; flex: none; margin: 3px 2px 0 2px; border-top: 1px solid #fff; border-bottom: 2px solid #777; }
  .mgraph { height: 186px; flex: none; display: flex; border-left: 2px solid #8a8a8a; margin-left: 1px; overflow: hidden; }
  .dl { width: 730px; padding-top: 7px; border-right: 1px solid #fff; }
  .disk { display: flex; height: 99px; box-sizing: border-box; border-top: 1px solid #fff; border-bottom: 1px solid #999; }
  .lab { width: 94px; border-right: 1px solid #a0a0a0; line-height: 15px; padding: 6px 0 0 8px; }
  .dn { display: flex; gap: 2px; padding-left: 2px; }
  .dn .mini { margin-top: 1px; }
  .parts { display: grid; padding-top: 3px; }
  .part { border-right: 1px solid #999; border-left: 1px solid #fff; height: 87px; display: flex; flex-direction: column; overflow: hidden; }
  .navy { height: 13px; flex: none; background: #000080; border-bottom: 1px solid #999; margin-right: 1px; }
  .pb { flex: 1; border-bottom: 1px solid #999; padding: 2px 3px 4px 3px; }
  .pi { position: relative; height: 66px; background: #fff; border-top: 1px solid #999; border-left: 1px solid #999; overflow: hidden; padding-left: 3px; line-height: 15px; }
  .ln { height: 15px; position: relative; top: 3px; }
  .ind { padding-left: 6px; }
  .sel .pb { background: #b8b8b8; }
  .sel .ln .t { background: #fff; }
  .hatch { position: absolute; left: 0; top: 0; }
  .scr { flex: 1; padding: 17px 0 0 7px; }
  .scr b { display: block; width: 2px; height: 76px; background: #8a8a8a; }
  .legend { height: 18px; flex: none; border-top: 1px solid #fff; border-bottom: 1px solid #999; border-left: 2px solid #8a8a8a; border-right: 1px solid #999; margin: 0 2px 0 1px; display: flex; align-items: center; padding-left: 4px; }
  .legend i { width: 10px; height: 11px; border: 1px solid #888; background: #000; margin-right: 4px; }
  .legend .nv { background: #000080; margin-left: 5px; }
  .mstat { flex: 1; border-top: 1px solid #d0d0d0; margin-top: 2px; display: flex; justify-content: flex-end; gap: 132px; padding: 1px 2px 1px 0; }
  .mstat i { width: 1px; background: #d4d4d4; }
  .mstat i:last-child { margin-left: -48px; }

  .taskbar { height: 47px; box-sizing: border-box; height: 48px; padding-bottom: 1px; flex: none; background: #1c1c1c; border-top: 1px solid #4a4a4a; display: flex; align-items: center; color: #fff; }
  .start { margin-left: 748.500px; }
  .pill { width: 220px; height: 32px; box-sizing: border-box; border-radius: 16px; background: #3b3b3b; border-top: 1px solid #5a5a5a; margin-left: 12.500px; display: flex; align-items: center; padding-left: 12px; gap: 10px; color: #ccc; }
  .tile { width: 40px; height: 40px; margin-left: 4px; border-radius: 4px; display: flex; align-items: center; justify-content: center; position: relative; }
  .tile.act { background: #2a2a2a; }
  .tile b { position: absolute; bottom: 1px; left: 17px; width: 6px; height: 3px; border-radius: 2px; background: #9a9a9a; }
  .tile.act b { left: 12px; width: 16px; background: #ff6b5e; }
  .tray { margin-left: auto; display: flex; align-items: center; padding-right: 19px; }
  .clock { display: flex; flex-direction: column; align-items: flex-end; margin-left: 16px; line-height: 16px; }
</style>
